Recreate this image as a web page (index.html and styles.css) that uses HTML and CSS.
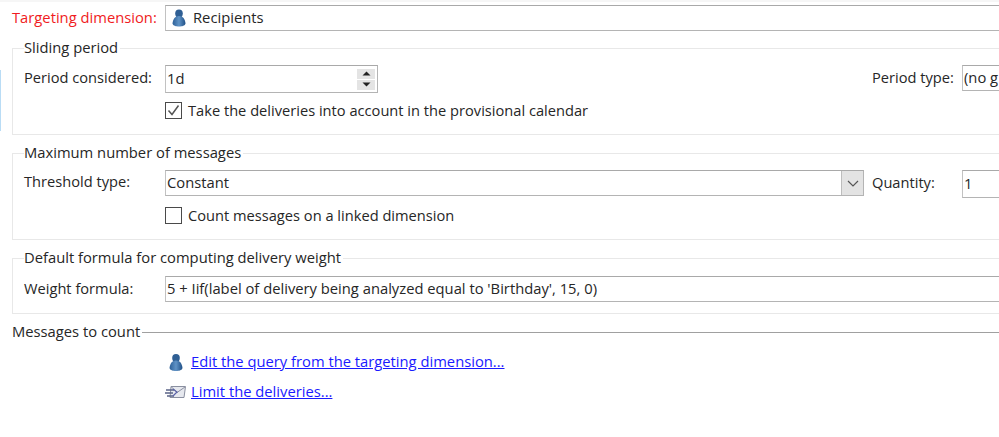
FILE: index.html
```html
<!DOCTYPE html>
<html lang="en">
<head>
<meta charset="utf-8">
<title>Typology rule</title>
<link rel="stylesheet" href="styles.css">
</head>
<body>
<span class="edge-mark"></span>
<main class="form">
  <div class="target-row">
    <span class="target-label">Targeting dimension:</span>
    <div class="field target-field">
      <svg class="icon" viewBox="0 0 16 18"><use href="#person"/></svg>
      <span class="value">Recipients</span>
    </div>
  </div>

  <fieldset class="group group-sliding">
    <legend>Sliding period</legend>
    <div class="row">
      <span class="label">Period considered:</span>
      <div class="field tall spin-field">
        <span class="value">1d</span>
        <span class="spinner">
          <span class="spin-btn"><svg viewBox="0 0 9 5"><path d="M4.5 .5 8.5 4.5H.5Z"/></svg></span>
          <span class="spin-btn"><svg viewBox="0 0 9 5"><path d="M.5 .5H8.5L4.5 4.5Z"/></svg></span>
        </span>
      </div>
      <span class="side-label">Period type:</span>
      <div class="field side-field"><span class="value">(no g</span></div>
    </div>
    <label class="check-row check-row-first">
      <span class="check"><svg viewBox="0 0 15 15"><path d="M2.5 7.5 6 11.5 12.5 2.5"/></svg></span>
      <span>Take the deliveries into account in the provisional calendar</span>
    </label>
  </fieldset>

  <fieldset class="group group-max">
    <legend>Maximum number of messages</legend>
    <div class="row">
      <span class="label">Threshold type:</span>
      <div class="field select-field">
        <span class="value">Constant</span>
        <span class="drop"><svg viewBox="0 0 12 7"><path d="M1 1 6 6 11 1"/></svg></span>
      </div>
      <span class="qty-label">Quantity:</span>
      <div class="field tall side-field"><span class="value">1</span></div>
    </div>
    <label class="check-row">
      <span class="check"></span>
      <span>Count messages on a linked dimension</span>
    </label>
  </fieldset>

  <fieldset class="group group-weight">
    <legend>Default formula for computing delivery weight</legend>
    <div class="row">
      <span class="label">Weight formula:</span>
      <div class="field wide-field"><span class="value">5 + Iif(label of delivery being analyzed equal to 'Birthday', 15, 0)</span></div>
    </div>
  </fieldset>

  <div class="section-head"><span class="section-title">Messages to count</span><span class="rule"></span></div>
  <ul class="links">
    <li>
      <svg class="icon icon-person" viewBox="0 0 16 18"><use href="#person"/></svg>
      <a href="#">Edit the query from the targeting dimension...</a>
    </li>
    <li>
      <svg class="icon icon-mail" viewBox="0 0 22 16">
        <path d="M6 2.500H20.500L19 13.500H5Z" fill="#e6e8ee" stroke="#8a8fa0"/>
        <path d="M6.500 3 12 8.500 20 3" fill="none" stroke="#8a8fa0"/>
        <path d="M1 6H9M0 9H8M2 12H9" stroke="#5b6488" stroke-width="1.400"/>
        <path d="M8 5 12 8 8 12" fill="none" stroke="#5b63a8" stroke-width="1.200"/>
      </svg>
      <a href="#">Limit the deliveries...</a>
    </li>
  </ul>
</main>
<svg class="defs" width="0" height="0" aria-hidden="true">
  <defs>
    <linearGradient id="body-fill" x1="0" x2="1" y1="0" y2="0">
      <stop offset="0" stop-color="#2d6098"/>
      <stop offset=".5" stop-color="#5f93c6"/>
      <stop offset="1" stop-color="#1f4f86"/>
    </linearGradient>
    <symbol id="person" viewBox="0 0 16 18">
      <ellipse cx="8" cy="4.600" rx="3.800" ry="4.200" fill="#2f5f94"/>
      <path d="M8 7C4 7 2 10 1.500 14.500 2 16.800 5 17.500 8 17.500S14 16.800 14.500 14.500C14 10 12 7 8 7Z" fill="url(#body-fill)"/>
    </symbol>
  </defs>
</svg>
</body>
</html>
```
FILE: styles.css
```css
html, body {
  margin: 0;
  height: 100%;
  overflow: hidden;
  background: #fff;
}
body {
  position: relative;
  font-family: "Open Sans", "Noto Sans", sans-serif;
  font-size: 14.65px;
  color: #262626;
}
.edge-mark {
  position: absolute;
  left: 0;
  top: 70px;
  width: 1px;
  height: 61px;
  background: #b9dcf5;
}
.defs { position: absolute; }
.form {
  width: 1040px;
  padding: 3px 0 0 12px;
  border-top: 2px solid #f6f6f6;
}
.target-row {
  display: flex;
  align-items: center;
}
.row {
  display: flex;
  align-items: flex-start;
}
.target-label {
  width: 153px;
  flex: none;
  font-size: 14.75px;
  color: #f01c22;
  padding-bottom: 2px;
}
.field {
  display: flex;
  align-items: center;
  box-sizing: border-box;
  background: #fff;
  border: 1px solid #b4b4b4;
  border-top-color: #a9a9a9;
  border-left-color: #c2c2c2;
  height: 26px;
  padding-left: 1px;
  white-space: nowrap;
  overflow: hidden;
}
.field.tall { height: 28px; }
.value { padding-bottom: 2px; font-size: 14.75px; }
.target-field {
  flex: 1;
  padding-left: 5px;
  gap: 6px;
}
.icon { width: 16px; height: 18px; flex: none; }
.group {
  margin: 0;
  padding: 0 0 0 11px;
  border: 1.500px solid #e8e8e8;
  min-width: 0;
  box-sizing: border-box;
}
.group legend {
  padding: 0 2px 2px 0;
  font-size: 14.75px;
  line-height: 18px;
}
.group .row { margin-top: 7px; }
.group-sliding { margin-top: 7px; height: 97px; }
.group-max { margin-top: 8px; height: 97px; }
.group-weight { margin-top: 8px; height: 66px; }
.group-weight .row { margin-top: 8px; }
.label {
  width: 141px;
  flex: none;
  line-height: 24px;
}
.group-max .label { line-height: 22px; }
.spin-field {
  width: 213px;
  flex: none;
  justify-content: space-between;
}
.spinner {
  display: flex;
  flex-direction: column;
  gap: 1px;
  margin-right: 2px;
}
.spin-btn {
  display: flex;
  align-items: center;
  justify-content: center;
  width: 18px;
  height: 10px;
  background: #e4e4e4;
}
.spin-btn svg { width: 9px; height: 5px; fill: #222; }
.side-label { margin-left: 494px; width: 90px; flex: none; line-height: 24px; }
.side-field { flex: 1; }
.select-field {
  width: 699px;
  flex: none;
  justify-content: space-between;
  padding-right: 0;
}
.drop {
  display: flex;
  align-items: center;
  justify-content: center;
  width: 21px;
  height: 24px;
  background: #e3e3e3;
  border-left: 1px solid #bdbdbd;
}
.drop svg { width: 12px; height: 7px; fill: none; stroke: #555; stroke-width: 1.2; }
.qty-label { margin-left: 8px; width: 90px; flex: none; line-height: 24px; }
.wide-field { flex: 1; }
.check-row {
  display: flex;
  align-items: center;
  gap: 6px;
  margin: 9px 0 0 141px;
  line-height: 17px;
}
.check {
  display: block;
  width: 17px;
  height: 17px;
  box-sizing: border-box;
  border: 1px solid #4a4a4a;
  background: #fff;
}
.check svg { display: block; width: 15px; height: 15px; fill: none; stroke: #555; stroke-width: 1.5; }
.section-head {
  display: flex;
  align-items: center;
  gap: 2px;
  margin-top: 8px;
  line-height: 20px;
}
.section-title { padding-bottom: 2px; line-height: 18px; font-size: 14.75px; }
.rule {
  flex: 1;
  height: 1px;
  background: #a0a0a0;
}
.links {
  list-style: none;
  margin: 5px 0 0 153px;
  padding: 0;
  font-size: 14.75px;
}
.links li {
  display: flex;
  align-items: center;
  height: 30px;
}
.links a { margin-bottom: 2px; color: #1a1aff; }
.icon-person { margin: 0 7px 0 3px; height: 19px; }
.icon-mail { width: 22px; height: 16px; margin-right: 4px; }
```
